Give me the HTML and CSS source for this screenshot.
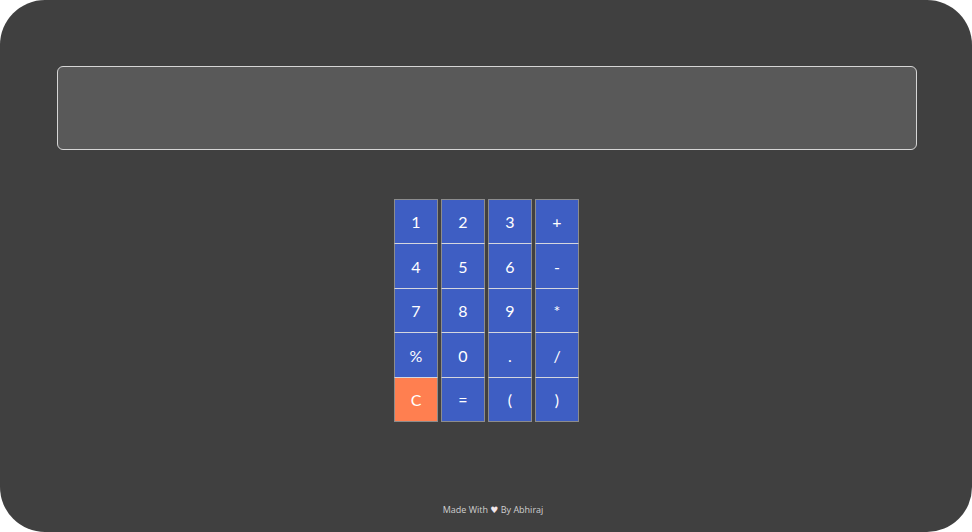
FILE: index.html
```html
<!DOCTYPE html>
<html lang="en">
<head>
<meta charset="utf-8">
<title>Calculator</title>
<link rel="stylesheet" href="styles.css">
</head>
<body>
<div class="app">
  <div class="display"></div>
  <div class="keypad">
    <button class="key">1</button>
    <button class="key">2</button>
    <button class="key">3</button>
    <button class="key">+</button>
    <button class="key">4</button>
    <button class="key">5</button>
    <button class="key">6</button>
    <button class="key">-</button>
    <button class="key">7</button>
    <button class="key">8</button>
    <button class="key">9</button>
    <button class="key">*</button>
    <button class="key">%</button>
    <button class="key">0</button>
    <button class="key">.</button>
    <button class="key">/</button>
    <button class="key key-clear last">C</button>
    <button class="key last">=</button>
    <button class="key last">(</button>
    <button class="key last">)</button>
  </div>
  <div class="footer">Made With <span class="heart">♥</span> By Abhiraj</div>
</div>
</body>
</html>
```
FILE: styles.css
```css
html, body {
  margin: 0;
  padding: 0;
  background: #ffffff;
}
.app {
  width: 972px;
  height: 532px;
  box-sizing: border-box;
  background: #404040;
  border-radius: 45px;
  padding-top: 66px;
  display: flex;
  flex-direction: column;
  align-items: center;
}
.display {
  align-self: stretch;
  margin: 0 55px 0 57px;
  height: 84px;
  box-sizing: border-box;
  background: #595959;
  border: 1px solid #d6d6d6;
  border-radius: 6px;
}
.keypad {
  margin-top: 49px;
  display: grid;
  grid-template-columns: repeat(4, 44px);
  grid-template-rows: 44px 45px 44px 45px 45px;
  column-gap: 3px;
  margin-left: 1px;
}
.key {
  margin: 0;
  padding: 0;
  box-sizing: border-box;
  background: #3e5ec3;
  color: #ffffff;
  border: 1px solid #8c8c8c;
  border-bottom: 0;
  font-family: "Lato", "Open Sans", sans-serif;
  font-size: 16px;
  font-weight: 400;
  display: flex;
  align-items: center;
  justify-content: center;
}
.keypad .key:nth-child(n+5) {
  border-top-color: #d4d6de;
}
.key.last {
  border-bottom: 1px solid #8c8c8c;
}
.key-clear {
  background: #ff7f50;
}
.footer {
  margin-top: auto;
  margin-bottom: 16px;
  font-family: "Open Sans", "DejaVu Sans", sans-serif;
  font-size: 9px;
  color: #cfcfcf;
  margin-left: 14px;
}
.heart {
  color: #f0e6ea;
}
```
